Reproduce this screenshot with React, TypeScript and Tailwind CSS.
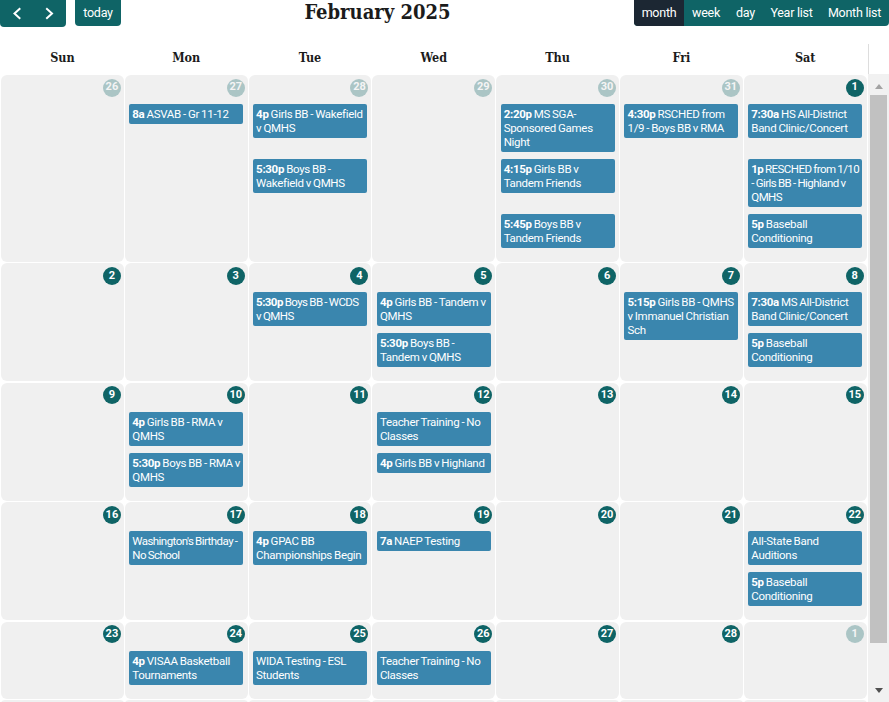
import React from "react";

type Ev = { t?: string; s: string; tight?: boolean };
type Day = { n: number; faded?: boolean; ev?: Ev[] };
type Week = { h: string; slots: string[]; days: Day[] };

const weeks: Week[] = [
  {
    h: "h-[186.9px]",
    slots: ["h-[48px]", "h-[48px]", "h-[34px]"],
    days: [
      { n: 26, faded: true },
      { n: 27, faded: true, ev: [{ t: "8a", s: "ASVAB - Gr 11-12" }] },
      { n: 28, faded: true, ev: [{ t: "4p", s: "Girls BB - Wakefield\nv QMHS" }, { t: "5:30p", s: "Boys BB -\nWakefield v QMHS" }] },
      { n: 29, faded: true },
      { n: 30, faded: true, ev: [{ t: "2:20p", s: "MS SGA-\nSponsored Games\nNight" }, { t: "4:15p", s: "Girls BB v\nTandem Friends" }, { t: "5:45p", s: "Boys BB v\nTandem Friends" }] },
      { n: 31, faded: true, ev: [{ t: "4:30p", s: "RSCHED from\n1/9 - Boys BB v RMA" }] },
      { n: 1, ev: [{ t: "7:30a", s: "HS All-District\nBand Clinic/Concert" }, { t: "1p", s: "RESCHED from 1/10\n- Girls BB - Highland v\nQMHS", tight: true }, { t: "5p", s: "Baseball\nConditioning" }] },
    ],
  },
  {
    h: "h-[118px]",
    slots: ["h-[34px]", "h-[34px]"],
    days: [
      { n: 2 },
      { n: 3 },
      { n: 4, ev: [{ t: "5:30p", s: "Boys BB - WCDS\nv QMHS", tight: true }] },
      { n: 5, ev: [{ t: "4p", s: "Girls BB - Tandem v\nQMHS" }, { t: "5:30p", s: "Boys BB -\nTandem v QMHS" }] },
      { n: 6 },
      { n: 7, ev: [{ t: "5:15p", s: "Girls BB - QMHS\nv Immanuel Christian\nSch" }] },
      { n: 8, ev: [{ t: "7:30a", s: "MS All-District\nBand Clinic/Concert" }, { t: "5p", s: "Baseball\nConditioning" }] },
    ],
  },
  {
    h: "h-[118px]",
    slots: ["h-[34px]", "h-[34px]"],
    days: [
      { n: 9 },
      { n: 10, ev: [{ t: "4p", s: "Girls BB - RMA v\nQMHS" }, { t: "5:30p", s: "Boys BB - RMA v\nQMHS" }] },
      { n: 11 },
      { n: 12, ev: [{ s: "Teacher Training - No\nClasses" }, { t: "4p", s: "Girls BB v Highland" }] },
      { n: 13 },
      { n: 14 },
      { n: 15 },
    ],
  },
  {
    h: "h-[118px]",
    slots: ["h-[34px]", "h-[34px]"],
    days: [
      { n: 16 },
      { n: 17, ev: [{ s: "Washington's Birthday -\nNo School", tight: true }] },
      { n: 18, ev: [{ t: "4p", s: "GPAC BB\nChampionships Begin" }] },
      { n: 19, ev: [{ t: "7a", s: "NAEP Testing" }] },
      { n: 20 },
      { n: 21 },
      { n: 22, ev: [{ s: "All-State Band\nAuditions" }, { t: "5p", s: "Baseball\nConditioning" }] },
    ],
  },
  {
    h: "h-[77px]",
    slots: ["h-[34px]"],
    days: [
      { n: 23 },
      { n: 24, ev: [{ t: "4p", s: "VISAA Basketball\nTournaments" }] },
      { n: 25, ev: [{ s: "WIDA Testing - ESL\nStudents" }] },
      { n: 26, ev: [{ s: "Teacher Training - No\nClasses" }] },
      { n: 27 },
      { n: 28 },
      { n: 1, faded: true },
    ],
  },
];

const heads = ["Sun", "Mon", "Tue", "Wed", "Thu", "Fri", "Sat"];
const serif = "font-['DejaVu_Serif_Condensed','DejaVu_Serif',serif]";

function Btn({ children, cls = "" }: { children: React.ReactNode; cls?: string }) {
  return (
    <div className={`flex items-center justify-center whitespace-nowrap text-[12.5px] tracking-[-0.25px] text-white ${cls}`}>
      {children}
    </div>
  );
}

export default function App() {
  return (
    <div className="h-[702px] w-[889px] overflow-hidden bg-white font-['Roboto','Liberation_Sans',sans-serif]">
      <div className="flex h-[26px] items-start justify-between">
        <div className="flex gap-[9px]">
          <div className="flex h-[27px] w-[66px] items-center rounded-b-[4px] bg-[#0f6466] text-white">
            <svg width="33" height="26" viewBox="0 0 33 26" fill="none" stroke="currentColor" strokeWidth="2" strokeLinecap="square">
              <path d="M19.5 8 L14.5 12.5 L19.5 17" />
            </svg>
            <svg width="33" height="26" viewBox="0 0 33 26" fill="none" stroke="currentColor" strokeWidth="2" strokeLinecap="square">
              <path d="M14 8 L19 12.5 L14 17" />
            </svg>
          </div>
          <Btn cls="h-[26px] w-[46px] rounded-b-[4px] bg-[#0f6466]">today</Btn>
        </div>
        <div className={`${serif} whitespace-nowrap pt-[1px] text-[20px] font-bold leading-[23px] text-[#1b1b1b]`}>February 2025</div>
        <div className="flex h-[26px] w-[255px] overflow-hidden rounded-b-[4px] bg-[#0f6466]">
          <Btn cls="w-[50px] bg-[#1c2733]">month</Btn>
          <Btn cls="w-[44px]">week</Btn>
          <Btn cls="w-[35px]">day</Btn>
          <Btn cls="w-[57px]">Year list</Btn>
          <Btn cls="w-[69px]">Month list</Btn>
        </div>
      </div>

      <div className="mt-[18px] h-[30px] w-[869px] border-r border-[#dddddd] pl-[1px]">
        <div className="grid w-[865.6px] grid-cols-7 gap-[1px]">
          {heads.map((d) => (
            <div key={d} className={`${serif} pt-[6px] text-center text-[12.5px] font-bold leading-[16px] text-[#1b1b1b]`}>
              {d}
            </div>
          ))}
        </div>
      </div>

      <div className="flex h-[628px] items-stretch">
        <div className="flex w-[868px] flex-col gap-[1.5px] overflow-hidden pl-[1.1px] pt-[1px]">
          {weeks.map((w, i) => (
            <div key={i} className={`grid w-[865.6px] shrink-0 grid-cols-7 gap-[1px] ${w.h}`}>
              {w.days.map((d, j) => (
                <div key={j} className="min-w-0 rounded-[6px] bg-[#f0f0f0] px-[4.4px] pt-[3.5px]">
                  <div className="-mr-[1.4px] flex h-[18px] justify-end">
                    <div
                      className={`flex h-[18px] w-[18px] items-center justify-center rounded-full bg-[#0f6466] text-[11px] font-bold text-white ${
                        d.faded ? "opacity-30" : ""
                      }`}
                    >
                      {d.n}
                    </div>
                  </div>
                  <div className="mt-[7.5px] flex flex-col gap-[7px]">
                    {(d.ev ?? []).map((e, k) => (
                      <div key={k} className={w.slots[k]}>
                        <div
                          className={`whitespace-pre rounded-[2px] bg-[#3a86ae] px-[3px] pb-[3px] pt-[3px] text-[11.5px] leading-[14px] text-white [word-spacing:-0.5px] ${
                            e.tight ? "tracking-[-0.55px]" : "tracking-[-0.3px]"
                          }`}
                        >
                          {e.t && <b className="font-bold">{e.t} </b>}
                          {e.s}
                        </div>
                      </div>
                    ))}
                  </div>
                </div>
              ))}
            </div>
          ))}
          <div className="grid h-[4px] w-[865.6px] shrink-0 grid-cols-7 gap-[1px]">
            {heads.map((d) => (
              <div key={d} className="rounded-t-[6px] bg-[#f0f0f0]" />
            ))}
          </div>
        </div>
        <div className="flex w-[21px] flex-col items-center bg-[#f1f1f1] px-[2px]">
          <div className="flex h-[21px] items-end pb-[6px]">
            <div className="h-0 w-0 border-x-[4.5px] border-b-[5px] border-x-transparent border-b-[#a3a3a3]" />
          </div>
          <div className="h-[548px] w-full bg-[#c1c1c1]" />
          <div className="flex h-[59px] w-full items-end justify-center pb-[9px]">
            <div className="h-0 w-0 border-x-[4.5px] border-t-[5px] border-x-transparent border-t-[#505050]" />
          </div>
        </div>
      </div>
    </div>
  );
}
